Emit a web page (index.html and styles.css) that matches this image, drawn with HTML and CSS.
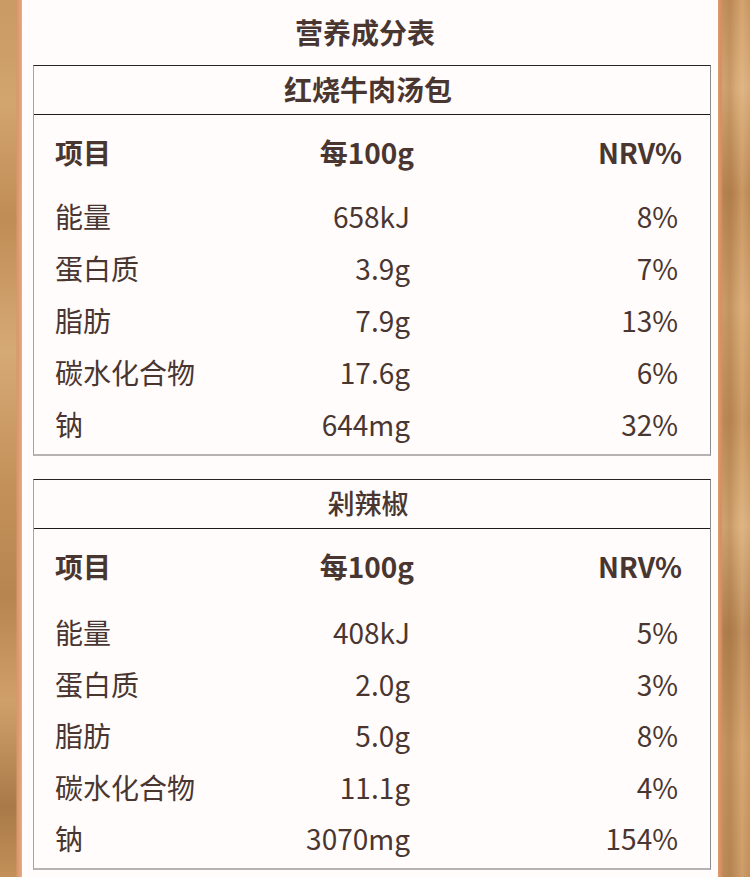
FILE: index.html
```html
<!DOCTYPE html>
<html lang="zh-CN">
<head>
<meta charset="utf-8">
<title>营养成分表</title>
<link rel="stylesheet" href="styles.css">
</head>
<body>
<div class="frame">
  <div class="wood wood-left"></div>
  <main class="paper">
    <h1 class="title">营养成分表</h1>

    <section class="table">
      <div class="table-head bold">红烧牛肉汤包</div>
      <div class="table-body">
        <div class="row row-head">
          <span class="c-name">项目</span>
          <span class="c-val">每100g</span>
          <span class="c-nrv">NRV%</span>
        </div>
        <div class="rows">
          <div class="row"><span class="c-name">能量</span><span class="c-val">658kJ</span><span class="c-nrv">8%</span></div>
          <div class="row"><span class="c-name">蛋白质</span><span class="c-val">3.9g</span><span class="c-nrv">7%</span></div>
          <div class="row"><span class="c-name">脂肪</span><span class="c-val">7.9g</span><span class="c-nrv">13%</span></div>
          <div class="row"><span class="c-name">碳水化合物</span><span class="c-val">17.6g</span><span class="c-nrv">6%</span></div>
          <div class="row"><span class="c-name">钠</span><span class="c-val">644mg</span><span class="c-nrv">32%</span></div>
        </div>
      </div>
    </section>

    <section class="table table-second">
      <div class="table-head medium">剁辣椒</div>
      <div class="table-body">
        <div class="row row-head">
          <span class="c-name">项目</span>
          <span class="c-val">每100g</span>
          <span class="c-nrv">NRV%</span>
        </div>
        <div class="rows">
          <div class="row"><span class="c-name">能量</span><span class="c-val">408kJ</span><span class="c-nrv">5%</span></div>
          <div class="row"><span class="c-name">蛋白质</span><span class="c-val">2.0g</span><span class="c-nrv">3%</span></div>
          <div class="row"><span class="c-name">脂肪</span><span class="c-val">5.0g</span><span class="c-nrv">8%</span></div>
          <div class="row"><span class="c-name">碳水化合物</span><span class="c-val">11.1g</span><span class="c-nrv">4%</span></div>
          <div class="row"><span class="c-name">钠</span><span class="c-val">3070mg</span><span class="c-nrv">154%</span></div>
        </div>
      </div>
    </section>
  </main>
  <div class="wood wood-right"></div>
</div>
</body>
</html>
```

FILE: styles.css
```css
html, body {
  margin: 0;
  padding: 0;
}
body {
  width: 750px;
  height: 877px;
  overflow: hidden;
  background: #fffcfb;
  font-family: "Noto Sans CJK SC", "Noto Sans", sans-serif;
  color: #4a3631;
}
.frame {
  display: flex;
  height: 877px;
}
.wood {
  flex: none;
  height: 100%;
}
.wood-left {
  width: 22px;
  background:
    linear-gradient(90deg, rgba(0,0,0,0) 0, rgba(0,0,0,0) 16px, #d9966a 17px, #e3a57a 21px, #e8b48d 22px),
    linear-gradient(180deg, #c99a63 0%, #d2a46e 12%, #c08c55 25%, #d6aa75 40%, #c4915a 55%, #b78550 68%, #d0a06a 80%, #a97a48 92%, #c29058 100%);
}
.wood-right {
  width: 32px;
  background:
    linear-gradient(90deg, #dd9b6f 0, #d48f62 3px, rgba(0,0,0,0) 5px),
    linear-gradient(90deg, rgba(0,0,0,0) 0, rgba(120,80,40,0.18) 12px, rgba(0,0,0,0) 18px, rgba(255,230,190,0.18) 24px, rgba(0,0,0,0) 32px),
    linear-gradient(180deg, #c89560 0%, #d8ab77 10%, #bb8752 22%, #d2a26d 35%, #c18e58 48%, #d6aa76 60%, #b58350 72%, #cc9a64 85%, #c18f5a 100%);
}
.paper {
  flex: 1;
  padding: 12px 7px 0 11px;
}
.title {
  margin: 0 0 13px;
  padding-right: 14px;
  height: 40px;
  line-height: 40px;
  text-align: center;
  font-size: 28px;
  font-weight: 700;
  letter-spacing: 0;
}
.table {
  border-top: 1px solid #2a2424;
  border-left: 1px solid #a4a2a2;
  border-right: 1px solid #8d8b8b;
  border-bottom: 2px solid #b5b3b3;
}
.table-second {
  margin-top: 23px;
}
.table-head {
  height: 48px;
  line-height: 46px;
  padding-right: 8px;
  text-align: center;
  font-size: 28px;
  border-bottom: 1px solid #1f1b1b;
}
.bold { font-weight: 700; }
.medium { font-weight: 500; font-size: 27px; }
.table-body {
  padding: 11px 0 4px 21px;
}
.row {
  display: grid;
  grid-template-columns: 200px 159px 268px;
  height: 52px;
  line-height: 52px;
  font-size: 28px;
  white-space: nowrap;
}
.row-head {
  font-weight: 700;
}
.rows {
  margin-top: 12px;
}
.table-second .rows {
  margin-top: 14px;
}
.table-second .row + .row {
  margin-top: -0.5px;
}
.c-val, .c-nrv {
  text-align: right;
}
.rows .c-val, .rows .c-nrv {
  padding-right: 4px;
}
```
